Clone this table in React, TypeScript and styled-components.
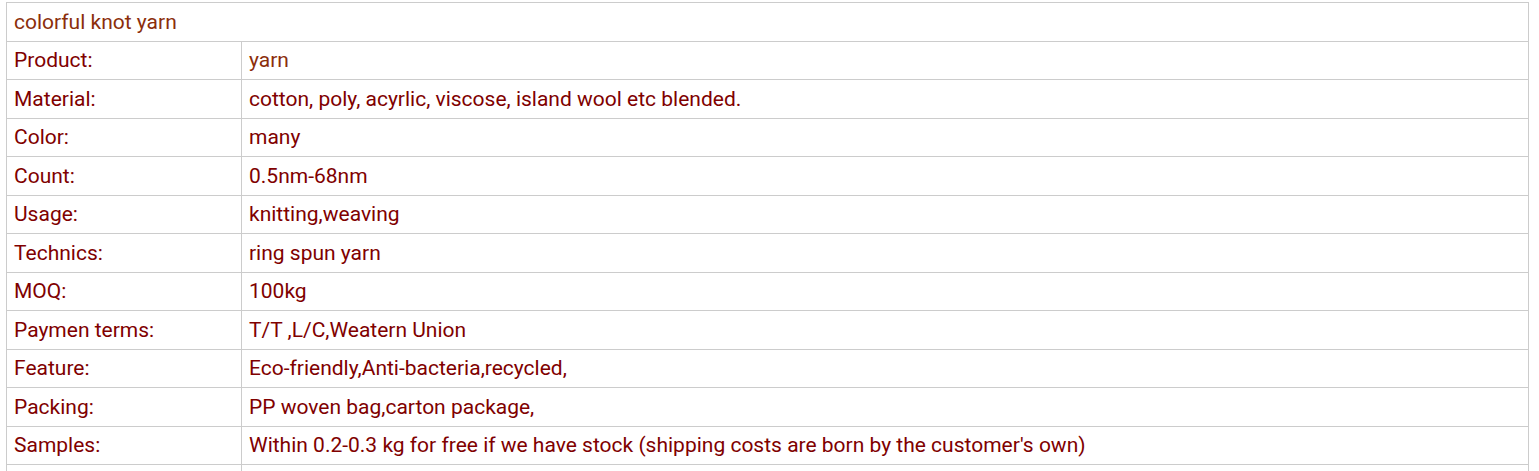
import React from "react";
import styled, { createGlobalStyle } from "styled-components";

const Global = createGlobalStyle`
  html, body { margin: 0; padding: 0; background: #fff; }
  body { font-family: Roboto, "Liberation Sans", sans-serif; }
`;

const Wrap = styled.div`
  padding: 2px 10px 0 6px;
`;

const Table = styled.table`
  width: 1523px;
  border-collapse: collapse;
  table-layout: fixed;
  font-size: 21px;
  color: #800000;
`;

const Row = styled.tr`
  height: 38.5px;
`;

const Cell = styled.td<{ $brown?: boolean }>`
  border: 1px solid #cccccc;
  padding: 0 7px;
  vertical-align: middle;
  line-height: 24px;
  color: ${(p) => (p.$brown ? "#8b2e0b" : "#800000")};
  white-space: nowrap;
`;

const rows: [string, string, boolean?][] = [
  ["Product:", "yarn", true],
  ["Material:", "cotton, poly, acyrlic, viscose, island wool etc blended."],
  ["Color:", "many"],
  ["Count:", "0.5nm-68nm"],
  ["Usage:", "knitting,weaving"],
  ["Technics:", "ring spun yarn"],
  ["MOQ:", "100kg"],
  ["Paymen terms:", "T/T ,L/C,Weatern Union"],
  ["Feature:", "Eco-friendly,Anti-bacteria,recycled,"],
  ["Packing:", "PP woven bag,carton package,"],
  ["Samples:", "Within 0.2-0.3 kg for free if we have stock (shipping costs are born by the customer's own)"],
  ["", ""],
];

export default function App() {
  return (
    <>
      <Global />
      <Wrap>
        <Table>
          <colgroup>
            <col style={{ width: 235 }} />
            <col />
          </colgroup>
          <tbody>
            <Row>
              <Cell colSpan={2} $brown>colorful knot yarn</Cell>
            </Row>
            {rows.map(([k, v, b], i) => (
              <Row key={i}>
                <Cell>{k}</Cell>
                <Cell $brown={b}>{v}</Cell>
              </Row>
            ))}
          </tbody>
        </Table>
      </Wrap>
    </>
  );
}
